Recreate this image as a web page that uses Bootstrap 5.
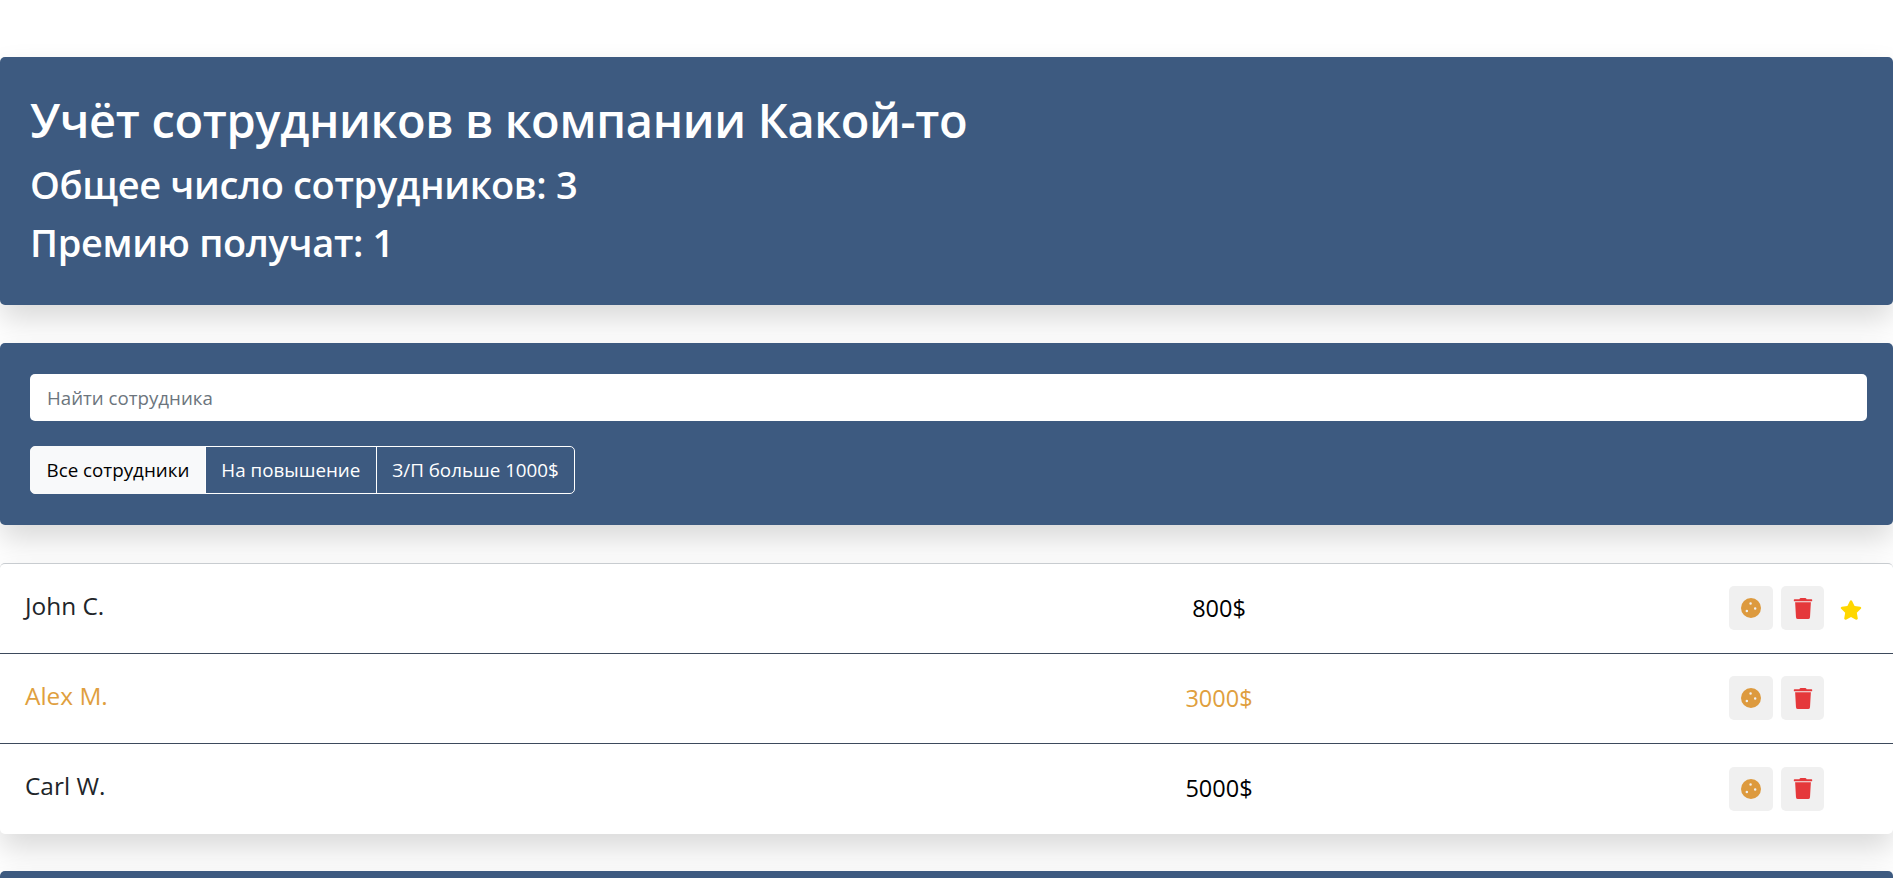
<!DOCTYPE html>
<html lang="ru">
<head>
  <meta charset="UTF-8" />
  <title>Учёт сотрудников</title>
  <link href="https://cdn.jsdelivr.net/npm/bootstrap@5.3.0/dist/css/bootstrap.min.css" rel="stylesheet">
  <style>
    html, body { height: 100%; overflow: hidden; }
    body { font-family: "Open Sans", "Noto Sans", sans-serif; color: #212529; }
    .app-wrap { padding-top: 57px; }
    .panel-blue {
      background: #3d5a80;
      color: #fff;
      border-radius: 5px;
      box-shadow: 0 15px 30px rgba(0, 0, 0, .15);
    }
    .panel-info { height: 248px; padding: 28px 30px 0; margin-bottom: 38px; }
    .panel-info h1 { font-size: 47px; font-weight: 600; line-height: 70px; margin: 0; letter-spacing: -.35px; }
    .panel-info h2 { font-size: 38px; font-weight: 600; line-height: 58px; margin: 0; letter-spacing: -.35px; }
    .panel-search { height: 182px; padding: 31px 26px 0 30px; margin-bottom: 38px; }
    .panel-search .form-control { height: 47px; font-size: 18.7px; padding: 0 17px; border-radius: 5px; border: 0; }
    .panel-search .form-control::placeholder { color: #6c757d; }
    .filter-group { margin-top: 25px; height: 48px; }
    .filter-group .btn { font-size: 18.8px; padding: 0 15.5px; color: #fff; border-color: #fff; border-radius: 5px; }
    .filter-group .btn.btn-light { color: #000; background: #f8f9fa; border-color: #f8f9fa; }
    .staff-list { box-shadow: 0 15px 30px rgba(0, 0, 0, .15); border-top: 1px solid #c8ccd0; border-radius: 5px; background: #fff; }
    .staff-row { height: 90px; padding: 0 24px 0 25px; border-bottom: 1px solid #3d4a5c; }
    .staff-row:last-child { border-bottom: 0; }
    .staff-name { flex: 1 1 0; font-size: 24.4px; margin-top: -5px; }
    .staff-salary { flex: 0 0 380px; text-align: center; font-size: 23.5px; color: #000; }
    .staff-actions { flex: 0 0 460px; margin-top: -1px; }
    .row-done .staff-name, .row-done .staff-salary { color: #e09f3e; }
    .icon-btn { width: 44px; height: 44px; padding: 0; background: #f0f0f0; border: 0; border-radius: 5px; }
    .icon-btn.trash-btn { width: 43px; }
    .icon-btn svg { display: block; margin: auto; width: 20px; height: 20px; }
    .icon-btn.trash-btn svg { height: 21px; }
    .star-slot { width: 37px; text-align: center; }
    .star-slot svg { width: 22px; height: 20px; fill: #ffd700; }
    .cookie-ico { fill: #dd9a3e; }
    .trash-ico { fill: #e5383b; }
    .panel-add { margin-top: 37px; height: 200px; }
  </style>
</head>
<body>
  <div class="app-wrap">
    <div class="panel-blue panel-info">
      <h1>Учёт сотрудников в компании Какой-то</h1>
      <h2>Общее число сотрудников: 3</h2>
      <h2>Премию получат: 1</h2>
    </div>

    <div class="panel-blue panel-search">
      <input type="text" class="form-control" placeholder="Найти сотрудника" />
      <div class="btn-group filter-group">
        <button type="button" class="btn btn-light">Все сотрудники</button>
        <button type="button" class="btn btn-outline-light">На повышение</button>
        <button type="button" class="btn btn-outline-light">З/П больше 1000$</button>
      </div>
    </div>

    <ul class="list-unstyled staff-list mb-0">
      <li class="staff-row d-flex align-items-center">
        <span class="staff-name">John C.</span>
        <span class="staff-salary">800$</span>
        <div class="staff-actions d-flex justify-content-end align-items-center gap-2">
          <button type="button" class="btn icon-btn"><svg class="cookie-ico" viewBox="0 0 24 24"><path fill-rule="evenodd" d="M12 0a12 12 0 1 0 0 24 12 12 0 0 0 0-24zM11.500 5a1.500 1.500 0 1 1 0 3 1.500 1.500 0 0 1 0-3zM7 14a1.500 1.500 0 1 1 0 3 1.500 1.500 0 0 1 0-3zM17 11a1.500 1.500 0 1 1 0 3 1.500 1.500 0 0 1 0-3z"/></svg></button>
          <button type="button" class="btn icon-btn trash-btn"><svg class="trash-ico" viewBox="0 0 448 512"><path d="M432 32H312l-9.400-18.700A24 24 0 0 0 281.100 0H166.800a23.720 23.720 0 0 0-21.400 13.300L136 32H16A16 16 0 0 0 0 48v16a16 16 0 0 0 16 16h416a16 16 0 0 0 16-16V48a16 16 0 0 0-16-16zM53.200 467a48 48 0 0 0 47.900 45h245.800a48 48 0 0 0 47.900-45L416 104H32z"/></svg></button>
          <span class="star-slot"><svg viewBox="0 0 576 512"><path d="M259.300 17.800L194 150.200 47.900 171.500c-26.200 3.800-36.700 36.100-17.700 54.600l105.700 103-25 145.500c-4.500 26.300 23.200 46 46.400 33.700L288 439.600l130.700 68.700c23.200 12.200 50.900-7.400 46.400-33.700l-25-145.500 105.700-103c19-18.500 8.500-50.800-17.700-54.600L382 150.200 316.700 17.800c-11.700-23.600-45.600-23.900-57.400 0z"/></svg></span>
        </div>
      </li>
      <li class="staff-row row-done d-flex align-items-center">
        <span class="staff-name">Alex M.</span>
        <span class="staff-salary">3000$</span>
        <div class="staff-actions d-flex justify-content-end align-items-center gap-2">
          <button type="button" class="btn icon-btn"><svg class="cookie-ico" viewBox="0 0 24 24"><path fill-rule="evenodd" d="M12 0a12 12 0 1 0 0 24 12 12 0 0 0 0-24zM11.500 5a1.500 1.500 0 1 1 0 3 1.500 1.500 0 0 1 0-3zM7 14a1.500 1.500 0 1 1 0 3 1.500 1.500 0 0 1 0-3zM17 11a1.500 1.500 0 1 1 0 3 1.500 1.500 0 0 1 0-3z"/></svg></button>
          <button type="button" class="btn icon-btn trash-btn"><svg class="trash-ico" viewBox="0 0 448 512"><path d="M432 32H312l-9.400-18.700A24 24 0 0 0 281.100 0H166.800a23.720 23.720 0 0 0-21.400 13.300L136 32H16A16 16 0 0 0 0 48v16a16 16 0 0 0 16 16h416a16 16 0 0 0 16-16V48a16 16 0 0 0-16-16zM53.200 467a48 48 0 0 0 47.900 45h245.800a48 48 0 0 0 47.900-45L416 104H32z"/></svg></button>
          <span class="star-slot"></span>
        </div>
      </li>
      <li class="staff-row d-flex align-items-center">
        <span class="staff-name">Carl W.</span>
        <span class="staff-salary">5000$</span>
        <div class="staff-actions d-flex justify-content-end align-items-center gap-2">
          <button type="button" class="btn icon-btn"><svg class="cookie-ico" viewBox="0 0 24 24"><path fill-rule="evenodd" d="M12 0a12 12 0 1 0 0 24 12 12 0 0 0 0-24zM11.500 5a1.500 1.500 0 1 1 0 3 1.500 1.500 0 0 1 0-3zM7 14a1.500 1.500 0 1 1 0 3 1.500 1.500 0 0 1 0-3zM17 11a1.500 1.500 0 1 1 0 3 1.500 1.500 0 0 1 0-3z"/></svg></button>
          <button type="button" class="btn icon-btn trash-btn"><svg class="trash-ico" viewBox="0 0 448 512"><path d="M432 32H312l-9.400-18.700A24 24 0 0 0 281.100 0H166.800a23.720 23.720 0 0 0-21.400 13.300L136 32H16A16 16 0 0 0 0 48v16a16 16 0 0 0 16 16h416a16 16 0 0 0 16-16V48a16 16 0 0 0-16-16zM53.200 467a48 48 0 0 0 47.900 45h245.800a48 48 0 0 0 47.900-45L416 104H32z"/></svg></button>
          <span class="star-slot"></span>
        </div>
      </li>
    </ul>

    <div class="panel-blue panel-add"></div>
  </div>
  <script src="https://cdn.jsdelivr.net/npm/bootstrap@5.3.0/dist/js/bootstrap.bundle.min.js"></script>
</body>
</html>
